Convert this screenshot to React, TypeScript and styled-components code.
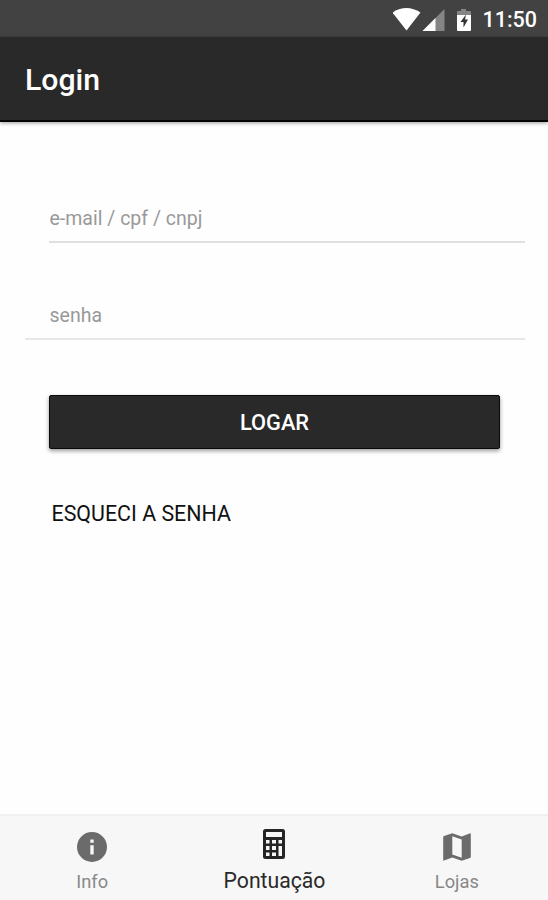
import React from "react";
import styled, { createGlobalStyle } from "styled-components";

const GlobalStyle = createGlobalStyle`
  * { box-sizing: border-box; }
  body { margin: 0; background: #fefefe; font-family: Roboto, "Liberation Sans", sans-serif; }
`;

const Screen = styled.div`
  display: flex;
  flex-direction: column;
  width: 548px;
  height: 900px;
  overflow: hidden;
  background: #fefefe;
`;

const StatusBar = styled.div`
  display: flex;
  flex: none;
  align-items: center;
  justify-content: flex-end;
  height: 37px;
  padding: 2px 11px 0 0;
  background: #424242;
  color: #fff;
`;

const StatusIcons = styled.svg`
  display: block;
  margin-right: 9px;
`;

const Clock = styled.time`
  font-size: 21.5px;
  font-weight: 500;
  line-height: 26px;
`;

const Header = styled.header`
  display: flex;
  flex: none;
  align-items: center;
  height: 85px;
  padding: 2px 25px 0;
  background: #292929;
  border-bottom: 2px solid #050505;
  box-shadow: 0 1px 4px rgba(0, 0, 0, 0.4);
`;

const Title = styled.h1`
  margin: 0;
  color: #fff;
  font-size: 30.2px;
  font-weight: 500;
  line-height: 36px;
`;

const Form = styled.form`
  display: flex;
  flex: 1;
  flex-direction: column;
  align-items: flex-start;
  padding: 72px 23px 0 25px;
`;

const Field = styled.input<{ $inset?: boolean }>`
  width: ${(p) => (p.$inset ? "476px" : "500px")};
  height: ${(p) => (p.$inset ? "49px" : "97px")};
  margin-left: ${(p) => (p.$inset ? "24px" : "0")};
  padding: ${(p) => (p.$inset ? "2px 0 0 0.5px" : "50px 0 0 24.5px")};
  border: 0;
  border-bottom: 2px solid ${(p) => (p.$inset ? "#e0e0e0" : "#e7e7e7")};
  border-radius: 0;
  outline: 0;
  background: transparent;
  color: #222;
  font: 400 19.5px/24px Roboto, sans-serif;
  &::placeholder { color: #999; opacity: 1; }
`;

const SubmitButton = styled.button`
  width: 451px;
  height: 54px;
  margin: 55px 0 0 24px;
  padding: 1px 0 0;
  border: 1px solid #0a0a0a;
  border-radius: 2px;
  background: #292929;
  box-shadow: 0 2px 4px rgba(0, 0, 0, 0.4);
  color: #fff;
  font: 500 21.8px/26px Roboto, sans-serif;
`;

const ForgotButton = styled.button`
  margin: 52px 0 0 26.5px;
  padding: 0;
  border: 0;
  background: none;
  color: #111;
  font: 400 21.4px/26px Roboto, sans-serif;
`;

const TabBar = styled.nav`
  display: grid;
  flex: none;
  grid-template-columns: repeat(3, 1fr);
  height: 86px;
  padding-left: 1px;
  border-top: 2px solid #f1f1f1;
  background: #f7f7f7;
`;

const Tab = styled.a<{ $active?: boolean }>`
  display: flex;
  flex-direction: column;
  align-items: center;
  padding-top: ${(p) => (p.$active ? "12px" : "15px")};
  color: ${(p) => (p.$active ? "#252525" : "#6b6b6b")};
`;

const TabIcon = styled.svg`
  display: block;
  width: 32px;
  height: 32px;
`;

const TabLabel = styled.span<{ $active?: boolean }>`
  margin-top: ${(p) => (p.$active ? "9px" : "7px")};
  color: ${(p) => (p.$active ? "#292929" : "#888")};
  font-size: ${(p) => (p.$active ? "21.2px" : "18.3px")};
  line-height: 24px;
`;

const InfoIcon = () => (
  <TabIcon viewBox="0 0 32 32">
    <path
      fill="currentColor"
      fillRule="evenodd"
      d="M16 1a15 15 0 1 0 0 30a15 15 0 1 0 0-30zM14.3 8.5h3.4v3.2h-3.4zM14.3 14.2h3.4v9.3h-3.4z"
    />
  </TabIcon>
);

const CalculatorIcon = () => (
  <TabIcon viewBox="0 0 32 32">
    <path
      fill="currentColor"
      fillRule="evenodd"
      d="M7.5 1h17a2.5 2.5 0 0 1 2.5 2.5v25a2.5 2.5 0 0 1-2.5 2.5h-17A2.5 2.5 0 0 1 5 28.5v-25A2.5 2.5 0 0 1 7.5 1zM8 4v5h16V4zM8 12v3.5h3.5V12zM14 12v3.5h4V12zM20.5 12v3.5H24V12zM8 18v4h3.5v-4zM14 18v4h4v-4zM20.5 18v10H24V18zM8 24.5V28h3.5v-3.5zM14 24.5V28h4v-3.5z"
    />
  </TabIcon>
);

const MapIcon = () => (
  <TabIcon viewBox="0 0 32 32">
    <path
      fill="currentColor"
      fillRule="evenodd"
      d="M29.2 2.2L20.7 5.4L11.3 2.2L3 5Q2.2 5.3 2.2 6V29Q2.2 29.9 3.1 29.6L11.3 26.5L20.7 29.8L29 27Q29.8 26.7 29.8 26V3Q29.8 2.1 29.2 2.2zM11.3 5.2L20.7 8.5V26.7L11.3 23.4z"
    />
  </TabIcon>
);

export default function App() {
  return (
    <>
      <GlobalStyle />
      <Screen>
        <StatusBar>
          <StatusIcons width="80" height="26" viewBox="0 0 80 26" fill="#fff">
            <path d="M-.5 5.5Q13.500-3.500 27.500 5.500L13.500 23.500z" />
            <path fill="#858585" d="M51.500 2V24H29.500z" />
            <path d="M42.500 11V24H29.500z" />
            <path fill="#858585" d="M65 4h3V2h5v2h4q1 0 1 1v5H64V5q0-1 1-1z" />
            <path d="M64 8h14v15q0 1-1 1H65q-1 0-1-1z" />
            <path fill="#333" d="M73 7.500L67.500 15H70.500V20.500L75 12.500H72z" />
          </StatusIcons>
          <Clock>11:50</Clock>
        </StatusBar>
        <Header>
          <Title>Login</Title>
        </Header>
        <Form onSubmit={(e) => e.preventDefault()}>
          <Field $inset type="text" placeholder="e-mail / cpf / cnpj" />
          <Field type="password" placeholder="senha" />
          <SubmitButton type="submit">LOGAR</SubmitButton>
          <ForgotButton type="button">ESQUECI A SENHA</ForgotButton>
        </Form>
        <TabBar>
          <Tab>
            <InfoIcon />
            <TabLabel>Info</TabLabel>
          </Tab>
          <Tab $active>
            <CalculatorIcon />
            <TabLabel $active>Pontuação</TabLabel>
          </Tab>
          <Tab>
            <MapIcon />
            <TabLabel>Lojas</TabLabel>
          </Tab>
        </TabBar>
      </Screen>
    </>
  );
}
